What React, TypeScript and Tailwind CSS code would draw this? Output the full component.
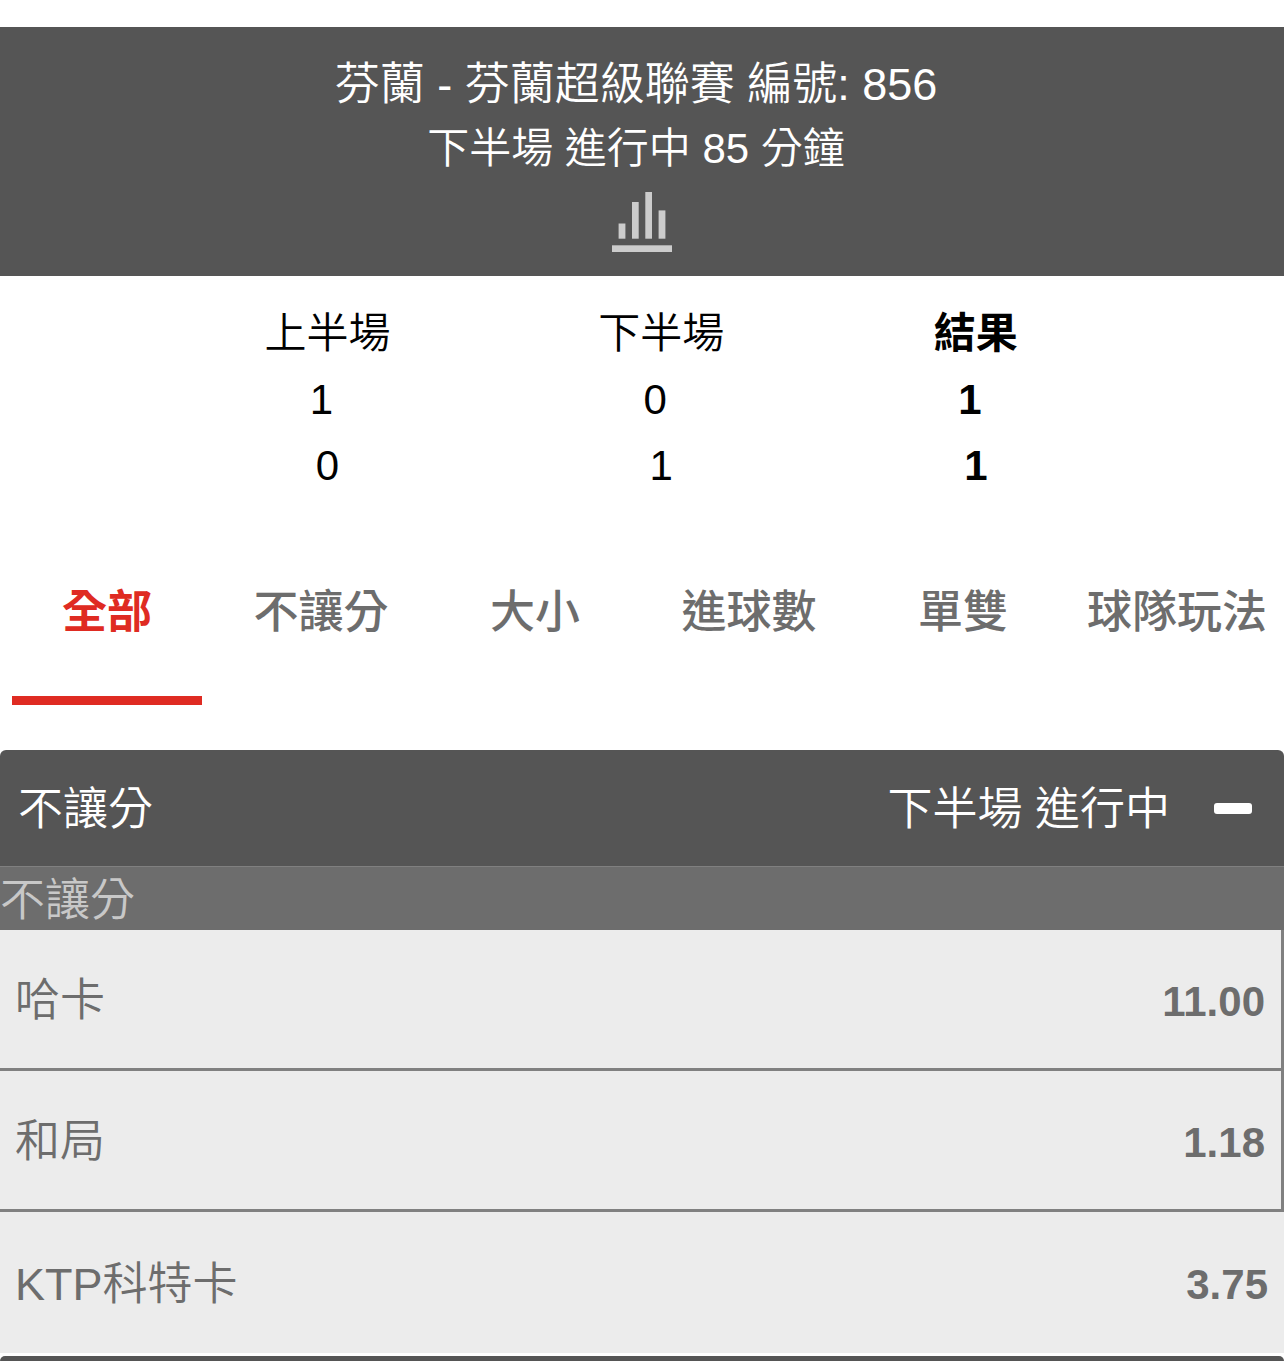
const TABS = ['全部', '不讓分', '大小', '進球數', '單雙', '球隊玩法']

const ODDS = [
  { name: '哈卡', price: '11.00' },
  { name: '和局', price: '1.18' },
  { name: 'KTP科特卡', price: '3.75' },
]

function StatsIcon() {
  return (
    <svg width="60" height="60" viewBox="0 0 60 60" fill="#ccc" aria-hidden="true">
      <rect x="0" y="53.3" width="60" height="6.7" />
      <rect x="6.6" y="31.5" width="6.8" height="15.2" />
      <rect x="20" y="10" width="6.7" height="36.7" />
      <rect x="33.3" y="0" width="6.7" height="46.7" />
      <rect x="46.6" y="18.4" width="6.8" height="28.3" />
    </svg>
  )
}

function MatchHeader() {
  return (
    <header className="flex flex-col items-center bg-[#555] pt-[26px] pb-6 text-white">
      <h1 className="pr-3 text-[45px] leading-[64px] font-[350]">芬蘭 - 芬蘭超級聯賽 編號: 856</h1>
      <p className="pr-3 text-[42px] leading-[64px]">下半場 進行中 85 分鐘</p>
      <button type="button" aria-label="Statistics" className="mt-[11px]">
        <StatsIcon />
      </button>
    </header>
  )
}

function ScoreTable() {
  return (
    <table className="mt-[25px] w-full table-fixed text-[42px] leading-[66px] text-black">
      <colgroup>
        <col className="w-[12.5%]" />
        <col className="w-[26%]" />
        <col className="w-[26%]" />
        <col className="w-[23%]" />
        <col className="w-[12.5%]" />
      </colgroup>
      <thead>
        <tr>
          <td />
          <th scope="col" className="font-[350]">上半場</th>
          <th scope="col" className="font-[350]">下半場</th>
          <th scope="col" className="font-bold">結果</th>
          <td />
        </tr>
      </thead>
      <tbody className="text-center">
        <tr>
          <td />
          <td className="pr-3">1</td>
          <td className="pr-3">0</td>
          <td className="pr-3 font-bold">1</td>
          <td />
        </tr>
        <tr>
          <td />
          <td>0</td>
          <td>1</td>
          <td className="font-bold">1</td>
          <td />
        </tr>
      </tbody>
    </table>
  )
}

export default function App() {
  return (
    <main className="bg-white pt-[27px] font-['Liberation_Sans','Noto_Sans_CJK_TC',sans-serif] font-[350]">
      <MatchHeader />
      <ScoreTable />

      <nav className="mt-[47px] grid grid-cols-6 text-[45px] leading-[64px] text-[#6d6d6d]">
        {TABS.map((tab, i) => (
          <button
            key={tab}
            type="button"
            className={
              i === 0
                ? 'mx-3 border-b-[9px] border-[#df2b22] pt-[35px] pb-[51px] font-bold whitespace-nowrap text-[#df2b22]'
                : 'mx-3 border-b-[9px] border-transparent pt-[35px] pb-[51px] font-medium whitespace-nowrap'
            }
          >
            {tab}
          </button>
        ))}
      </nav>

      <section className="mt-[45px]">
        <button
          type="button"
          className="flex h-[116px] w-full items-center justify-between rounded-t-md bg-[#555] pr-8 pl-[18px] text-[45px] text-white"
        >
          <span className="pt-1">不讓分</span>
          <span className="flex items-center gap-11">
            <span className="pt-1">下半場 進行中</span>
            <span className="h-[11px] w-[38px] rounded-[3px] bg-white" />
          </span>
        </button>
        <h2 className="border-t border-[#808080] bg-[#6d6d6d] pt-1 text-[45px] leading-[59px] text-[#c8c8c8]">
          不讓分
        </h2>
        <div className="text-[45px] text-[#6d6d6d]">
          {ODDS.map((odd) => (
            <button
              key={odd.name}
              type="button"
              className="flex h-[141px] w-full items-center justify-between border-r-[3px] border-b-[3px] border-[#808080] bg-[#ececec] pt-1 pr-4 pl-[15px] last:border-0"
            >
              <span>{odd.name}</span>
              <span className="text-[42px] font-bold">{odd.price}</span>
            </button>
          ))}
        </div>
      </section>
      <div className="mt-[3px] h-[5px] rounded-t-md bg-[#555]" />
    </main>
  )
}
